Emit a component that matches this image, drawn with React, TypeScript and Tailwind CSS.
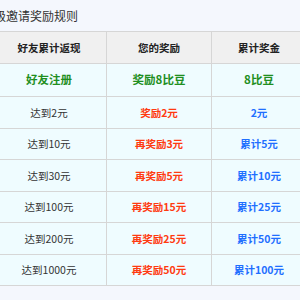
import React from "react";

type Row = { a: string; b: string; c: string; h: string };

const rows: Row[] = [
  { a: "达到2元", b: "奖励2元", c: "2元", h: "h-[32px]" },
  { a: "达到10元", b: "再奖励3元", c: "累计5元", h: "h-[31px]" },
  { a: "达到30元", b: "再奖励5元", c: "累计10元", h: "h-[32px]" },
  { a: "达到100元", b: "再奖励15元", c: "累计25元", h: "h-[31px]" },
  { a: "达到200元", b: "再奖励25元", c: "累计50元", h: "h-[32px]" },
  { a: "达到1000元", b: "再奖励50元", c: "累计100元", h: "h-[31px]" },
];

const cell = "flex items-center justify-center border-r border-b border-[#d6d6d6]";

export default function App() {
  return (
    <div className="w-[300px] h-[300px] overflow-hidden bg-[#f4f7fd] font-['Microsoft_YaHei','Noto_Sans_CJK_SC',sans-serif]">
      <div className="-ml-2 w-[315px]">
        <div className="h-[31px] flex items-center -ml-[10px] text-[12px] text-[#333]">三级邀请奖励规则</div>
        <div className="grid grid-cols-[115px_105px_95px] border-t border-[#d6d6d6] text-[10.5px]">
          <div className={`${cell} h-[32px] bg-[#f0f0f0] font-bold text-[#222]`}>好友累计返现</div>
          <div className={`${cell} h-[32px] bg-[#f0f0f0] font-bold text-[#222]`}>您的奖励</div>
          <div className={`${cell} h-[32px] bg-[#f0f0f0] font-bold text-[#222]`}>累计奖金</div>

          <div className={`${cell} h-[33px] bg-[#effcff] font-bold text-[11.5px] text-[#1f8f1f]`}>好友注册</div>
          <div className={`${cell} h-[33px] bg-[#effcff] font-bold text-[11.5px] text-[#1f8f1f]`}>奖励8比豆</div>
          <div className={`${cell} h-[33px] bg-[#effcff] font-bold text-[11.5px] text-[#1f8f1f]`}>8比豆</div>

          {rows.map((r) => (
            <React.Fragment key={r.a}>
              <div className={`${cell} ${r.h} bg-[#effcff] text-[#333]`}>{r.a}</div>
              <div className={`${cell} ${r.h} bg-[#effcff] font-bold text-[#ff3a10]`}>{r.b}</div>
              <div className={`${cell} ${r.h} bg-[#effcff] font-bold text-[#1f6fff]`}>{r.c}</div>
            </React.Fragment>
          ))}
        </div>
      </div>
    </div>
  );
}
